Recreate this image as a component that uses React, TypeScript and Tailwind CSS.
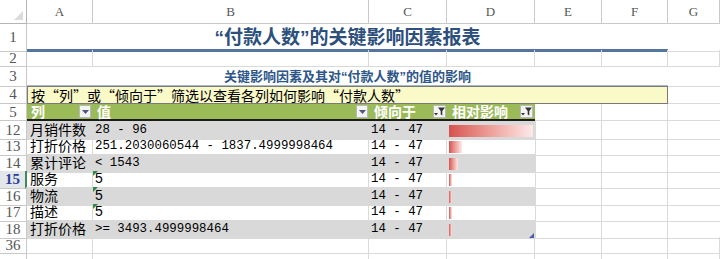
import React from "react";

const grid = "grid grid-cols-[27px_66px_276px_78px_88px_67px_66px_52px]";
const cjk = "font-['Noto_Sans_CJK_SC',sans-serif]";
const mono = "font-['Liberation_Mono',monospace]";
const head = "font-['Liberation_Serif',serif]";
const q = "font-['Liberation_Sans',sans-serif]";

const rows = [
  { n: "12", col: "月销件数", val: "28 - 96", bar: 84 },
  { n: "13", col: "打折价格", val: "251.2030060544 - 1837.4999998464", bar: 13 },
  { n: "14", col: "累计评论", val: "< 1543", bar: 9 },
  { n: "15", col: "服务", val: "5", bar: 3, text: true },
  { n: "16", col: "物流", val: "5", bar: 3, text: true },
  { n: "17", col: "描述", val: "5", bar: 3, text: true },
  { n: "18", col: "打折价格", val: ">= 3493.4999998464", bar: 3 },
];

function RowNum({ n, active }: { n: string; active?: boolean }) {
  return (
    <div
      className={`flex items-center justify-center border-r border-b border-[#c9c9c9] text-[15px] leading-none ${head} ${
        active ? "bg-[#e3e6ea] text-[#2a3f9a] font-bold border-r-2 border-r-[#3f8a5a]" : "text-[#555]"
      }`}
    >
      {n}
    </div>
  );
}

function Drop() {
  return (
    <span className="flex h-[13px] w-[12px] items-center justify-center border border-[#b8b8b8] bg-[#f4f4f4]">
      <svg width="7" height="4" viewBox="0 0 7 4">
        <path d="M0 0h7L3.5 4z" fill="#4a5a78" />
      </svg>
    </span>
  );
}

function Filter() {
  return (
    <span className="flex h-[13px] w-[13px] items-center justify-center border border-[#b8b8b8] bg-[#f4f4f4]">
      <svg width="11" height="9" viewBox="0 0 11 9">
        <path d="M0 6h4L2 8.5z" fill="#333" />
        <path d="M4 0.5h7L8.3 4v4.5L6.7 7.5V4z" fill="#333" />
      </svg>
    </span>
  );
}

export default function App() {
  return (
    <div className="h-[259px] w-[720px] overflow-hidden bg-white text-black">
      <div className={`${grid} h-[24px]`}>
        <div className="relative border-r border-b border-[#b5b5b5] bg-white">
          <svg className="absolute right-[3px] bottom-[3px]" width="9" height="9" viewBox="0 0 9 9">
            <path d="M9 0v9H0z" fill="#dcdcdc" />
          </svg>
        </div>
        {["A", "B", "C", "D", "E", "F", "G"].map((c) => (
          <div
            key={c}
            className={`flex items-center justify-center border-r border-b border-[#c9c9c9] text-[13px] text-[#555] ${head}`}
          >
            {c}
          </div>
        ))}
      </div>

      <div className={`${grid} h-[26px]`}>
        <RowNum n="1" />
        <div
          className={`col-span-6 border-b-[3px] border-[#54769e] text-center text-[19px] leading-[23px] font-bold text-[#2c4f7c] ${cjk}`}
        >
          <span className={q}>“</span>付款人数<span className={q}>”</span>的关键影响因素报表
        </div>
        <div className="border-b border-[#dadada]" />
      </div>

      <div className={`${grid} h-[17px]`}>
        <RowNum n="2" />
        {[0, 1, 2, 3, 4, 5, 6].map((i) => (
          <div key={i} className="border-r border-b border-[#dadada]" />
        ))}
      </div>

      <div className={`${grid} h-[19px]`}>
        <RowNum n="3" />
        <div
          className={`col-span-6 border-b-2 border-[#a9b9cc] text-center text-[13px] leading-[17px] font-bold text-[#2e5689] ${cjk}`}
        >
          关键影响因素及其对<span className={q}>“</span>付款人数<span className={q}>”</span>的值的影响
        </div>
        <div className="border-b border-[#dadada]" />
      </div>

      <div className={`${grid} h-[18px]`}>
        <RowNum n="4" />
        <div
          className={`col-span-6 border border-[#7a7a7a] bg-[#fafac8] pl-[3px] text-[14px] leading-[16px] ${cjk}`}
        >
          按“列”或“倾向于”筛选以查看各列如何影响“付款人数”
        </div>
        <div className="border-b border-[#dadada]" />
      </div>

      <div className={`${grid} h-[17px]`}>
        <RowNum n="5" />
        <div className={`flex items-center justify-between border-b-2 border-[#1c1c1c] bg-[#9bbb59] pl-[4px] pr-[2px] text-[14px] leading-[15px] font-bold text-white ${cjk}`}>
          <span>列</span>
          <Drop />
        </div>
        <div className={`flex items-center justify-between border-b-2 border-[#1c1c1c] bg-[#9bbb59] pl-[4px] pr-[1px] text-[14px] leading-[15px] font-bold text-white ${cjk}`}>
          <span>值</span>
          <Drop />
        </div>
        <div className={`flex items-center justify-between border-b-2 border-[#1c1c1c] bg-[#9bbb59] pl-[5px] pr-[1px] text-[14px] leading-[15px] font-bold text-white ${cjk}`}>
          <span>倾向于</span>
          <Filter />
        </div>
        <div className={`flex items-center justify-between border-b-2 border-[#1c1c1c] bg-[#9bbb59] pl-[5px] pr-[2px] text-[14px] leading-[15px] font-bold text-white ${cjk}`}>
          <span>相对影响</span>
          <Filter />
        </div>
        <div className="border-r border-b border-[#dadada]" />
        <div className="border-r border-b border-[#dadada]" />
        <div className="border-b border-[#dadada]" />
      </div>

      {rows.map((r, i) => {
        const shade = i % 2 === 0;
        const fill = shade ? "bg-[#d9d9d9]" : "border-r border-b border-[#dadada]";
        const lh = shade ? "leading-[17px]" : "leading-[15px]";
        const mlh = shade ? "leading-[19px]" : "leading-[17px]";
        return (
          <div key={r.n} className={`${grid} ${shade ? "h-[17px]" : "h-[16px]"}`}>
            <RowNum n={r.n} active={r.n === "15"} />
            <div className={`whitespace-nowrap pl-[3px] text-[14px] ${lh} ${cjk} ${fill}`}>{r.col}</div>
            <div
              className={`relative whitespace-nowrap pl-[2px] ${fill} ${
                r.text ? `text-[14px] ${lh} font-['Liberation_Sans',sans-serif]` : `text-[12.4px] ${mlh} ${mono}`
              }`}
            >
              {r.text && (
                <svg className="absolute left-0 top-0" width="5" height="5" viewBox="0 0 5 5">
                  <path d="M0 0h5L0 5z" fill="#2f8a4a" />
                </svg>
              )}
              {r.val}
            </div>
            <div className={`whitespace-nowrap pl-[2px] text-[12.4px] ${mlh} ${mono} ${fill}`}>14 - 47</div>
            <div className={`relative flex items-center pl-[2px] ${shade ? "bg-[#d9d9d9]" : "border-b border-[#dadada]"}`}>
              <div className="h-[12px] bg-gradient-to-r from-[#d5514e] to-[#fbeaea]" style={{ width: r.bar }} />
              {r.n === "18" && (
                <svg className="absolute right-[1px] bottom-[1px]" width="5" height="5" viewBox="0 0 5 5">
                  <path d="M5 0v5H0z" fill="#4a5fa8" />
                </svg>
              )}
            </div>
            <div className="border-l border-r border-b border-[#dadada]" />
            <div className="border-r border-b border-[#dadada]" />
            <div className="border-b border-[#dadada]" />
          </div>
        );
      })}

      <div className={`${grid} h-[17px]`}>
        <RowNum n="36" />
        {[0, 1, 2, 3, 4, 5, 6].map((i) => (
          <div key={i} className="border-r border-b border-[#dadada]" />
        ))}
      </div>
      <div className={`${grid} h-[10px]`}>
        <div className="border-r border-[#c9c9c9]" />
        {[0, 1, 2, 3, 4, 5, 6].map((i) => (
          <div key={i} className="border-r border-[#dadada]" />
        ))}
      </div>
    </div>
  );
}
